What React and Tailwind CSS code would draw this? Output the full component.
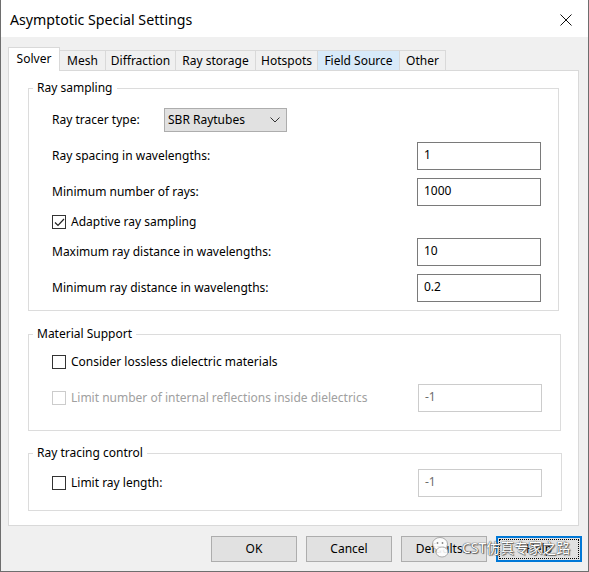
import React from 'react';

const font = { fontFamily: '"Noto Sans", "Noto Sans CJK SC", sans-serif' };

const tabs = ['Solver', 'Mesh', 'Diffraction', 'Ray storage', 'Hotspots', 'Field Source', 'Other'];
const tabWidths = ['w-[52px]', 'w-[46px]', 'w-[70px]', 'w-[80px]', 'w-[62px]', 'w-[82px]', 'w-[46px]'];

const CheckBox = ({ checked, disabled }) => (
  <div
    className={`w-[14px] h-[14px] border bg-white flex items-center justify-center shrink-0 ${
      disabled ? 'border-[#cccccc]' : 'border-[#333333]'
    }`}
  >
    {checked && (
      <svg width="11" height="9" viewBox="0 0 11 9">
        <path d="M1 4.5 L4 7.5 L10 1" fill="none" stroke="#222" strokeWidth="1.2" />
      </svg>
    )}
  </div>
);

const TextBox = ({ value, disabled }) => (
  <div
    className={`w-[124px] h-[28px] border bg-white pl-[6px] pt-[3px] text-[12px] leading-[18px] ${
      disabled ? 'border-[#cccccc] text-[#6d6d6d]' : 'border-[#7a7a7a] text-black'
    }`}
  >
    {value}
  </div>
);

const Group = ({ title, className, children }) => (
  <div className={`relative border border-[#dcdcdc] ${className}`}>
    <span className="absolute -top-[10px] left-[4px] bg-white px-[4px] text-[12px] leading-[18px] text-black">
      {title}
    </span>
    {children}
  </div>
);

export default function App() {
  return (
    <div
      className="w-[589px] h-[572px] bg-[#f0f0f0] border-l border-r border-b border-[#6e6e6e] flex flex-col text-black"
      style={font}
    >
      {/* title bar */}
      <div className="h-[37px] bg-white flex items-center justify-between pl-[9px] pr-[16px] pt-[3px] shrink-0">
        <span className="text-[14.2px] leading-none">Asymptotic Special Settings</span>
        <svg width="12" height="12" viewBox="0 0 12 12">
          <path d="M0.5 0.5 L11.5 11.5 M11.5 0.5 L0.5 11.5" stroke="#111" strokeWidth="1" />
        </svg>
      </div>

      {/* tabs */}
      <div className="pl-[7px] pt-[9px] flex items-end h-[33px] shrink-0">
        {tabs.map((t, i) => {
          const sel = i === 0;
          const hover = t === 'Field Source';
          return (
            <div
              key={t}
              className={`${tabWidths[i]} flex items-center justify-center text-[12px] border-t border-r ${
                i === 0 ? 'border-l' : ''
              } ${
                sel
                  ? 'h-[24px] bg-white border-[#d9d9d9] relative z-10 -mb-px pb-[2px]'
                  : hover
                  ? 'h-[20px] bg-[#d8eaf9] border-[#d9d9d9]'
                  : 'h-[20px] bg-[#f0f0f0] border-[#d9d9d9]'
              }`}
            >
              {t}
            </div>
          );
        })}
      </div>

      {/* panel */}
      <div className="ml-[7px] w-[571px] h-[456px] bg-white border border-[#d9d9d9] flex flex-col text-[12px]">
        <Group title="Ray sampling" className="mt-[17px] ml-[19px] w-[531px] h-[223px]">
          <div className="pl-[23px] pr-[17px] flex flex-col">
            <div className="mt-[19px] h-[24px] flex items-center">
              <span className="w-[112px]">Ray tracer type:</span>
              <div className="w-[123px] h-[24px] bg-[#e1e1e1] border border-[#adadad] flex items-center justify-between pl-[3px] pr-[6px]">
                <span>SBR Raytubes</span>
                <svg width="10" height="6" viewBox="0 0 10 6">
                  <path d="M0.5 0.5 L5 5 L9.5 0.5" fill="none" stroke="#333" strokeWidth="1" />
                </svg>
              </div>
            </div>
            <div className="mt-[10px] flex items-center justify-between">
              <span>Ray spacing in wavelengths:</span>
              <TextBox value="1" />
            </div>
            <div className="mt-[8px] flex items-center justify-between">
              <span>Minimum number of rays:</span>
              <TextBox value="1000" />
            </div>
            <div className="mt-[6px] h-[20px] flex items-center gap-[5px]">
              <CheckBox checked />
              <span>Adaptive ray sampling</span>
            </div>
            <div className="mt-[6px] flex items-center justify-between">
              <span>Maximum ray distance in wavelengths:</span>
              <TextBox value="10" />
            </div>
            <div className="mt-[8px] flex items-center justify-between">
              <span>Minimum ray distance in wavelengths:</span>
              <TextBox value="0.2" />
            </div>
          </div>
        </Group>

        <Group title="Material Support" className="mt-[23px] ml-[19px] w-[533px] h-[97px]">
          <div className="pl-[23px] pr-[18px] flex flex-col">
            <div className="mt-[17px] h-[20px] flex items-center gap-[5px]">
              <CheckBox />
              <span>Consider lossless dielectric materials</span>
            </div>
            <div className="mt-[12px] flex items-center justify-between">
              <div className="flex items-center gap-[5px] text-[#a0a0a0]">
                <CheckBox disabled />
                <span>Limit number of internal reflections inside dielectrics</span>
              </div>
              <TextBox value="-1" disabled />
            </div>
          </div>
        </Group>

        <Group title="Ray tracing control" className="mt-[22px] ml-[19px] w-[534px] h-[58px]">
          <div className="pl-[23px] pr-[19px] mt-[15px] flex items-center justify-between">
            <div className="flex items-center gap-[5px]">
              <CheckBox />
              <span>Limit ray length:</span>
            </div>
            <TextBox value="-1" disabled />
          </div>
        </Group>
      </div>

      {/* buttons */}
      <div className="relative mt-[10px] pl-[210px] flex gap-[9px] text-[12px]">
        {['OK', 'Cancel', 'Defaults...'].map((b) => (
          <div
            key={b}
            className="w-[86px] h-[26px] bg-[#e1e1e1] border border-[#adadad] flex items-center justify-center"
          >
            {b}
          </div>
        ))}
        <div className="w-[86px] h-[26px] bg-[#e1e1e1] border-2 border-[#0078d7] p-[1px]">
          <div className="w-full h-full border border-dotted border-black flex items-center justify-center">
            Help
          </div>
        </div>
        {/* watermark overlay */}
        <div className="absolute left-[431px] top-0 flex items-center gap-[13px] pointer-events-none">
          <svg width="17" height="24" viewBox="0 0 17 24">
            <ellipse cx="8" cy="8" rx="7.5" ry="6.5" fill="rgba(255,255,255,0.9)" stroke="#9a9a9a" strokeWidth="0.8" />
            <ellipse cx="10" cy="16" rx="6" ry="5" fill="rgba(255,255,255,0.9)" stroke="#9a9a9a" strokeWidth="0.8" />
            <circle cx="5.5" cy="7" r="0.9" fill="#888" />
            <circle cx="10.5" cy="7" r="0.9" fill="#888" />
          </svg>
          <span className="text-[14px] leading-[18px] text-white [text-shadow:0_0_1px_#444,0_0_1px_#444,1px_1px_1px_#666]">
            CST仿真专家之路
          </span>
        </div>
      </div>
    </div>
  );
}
